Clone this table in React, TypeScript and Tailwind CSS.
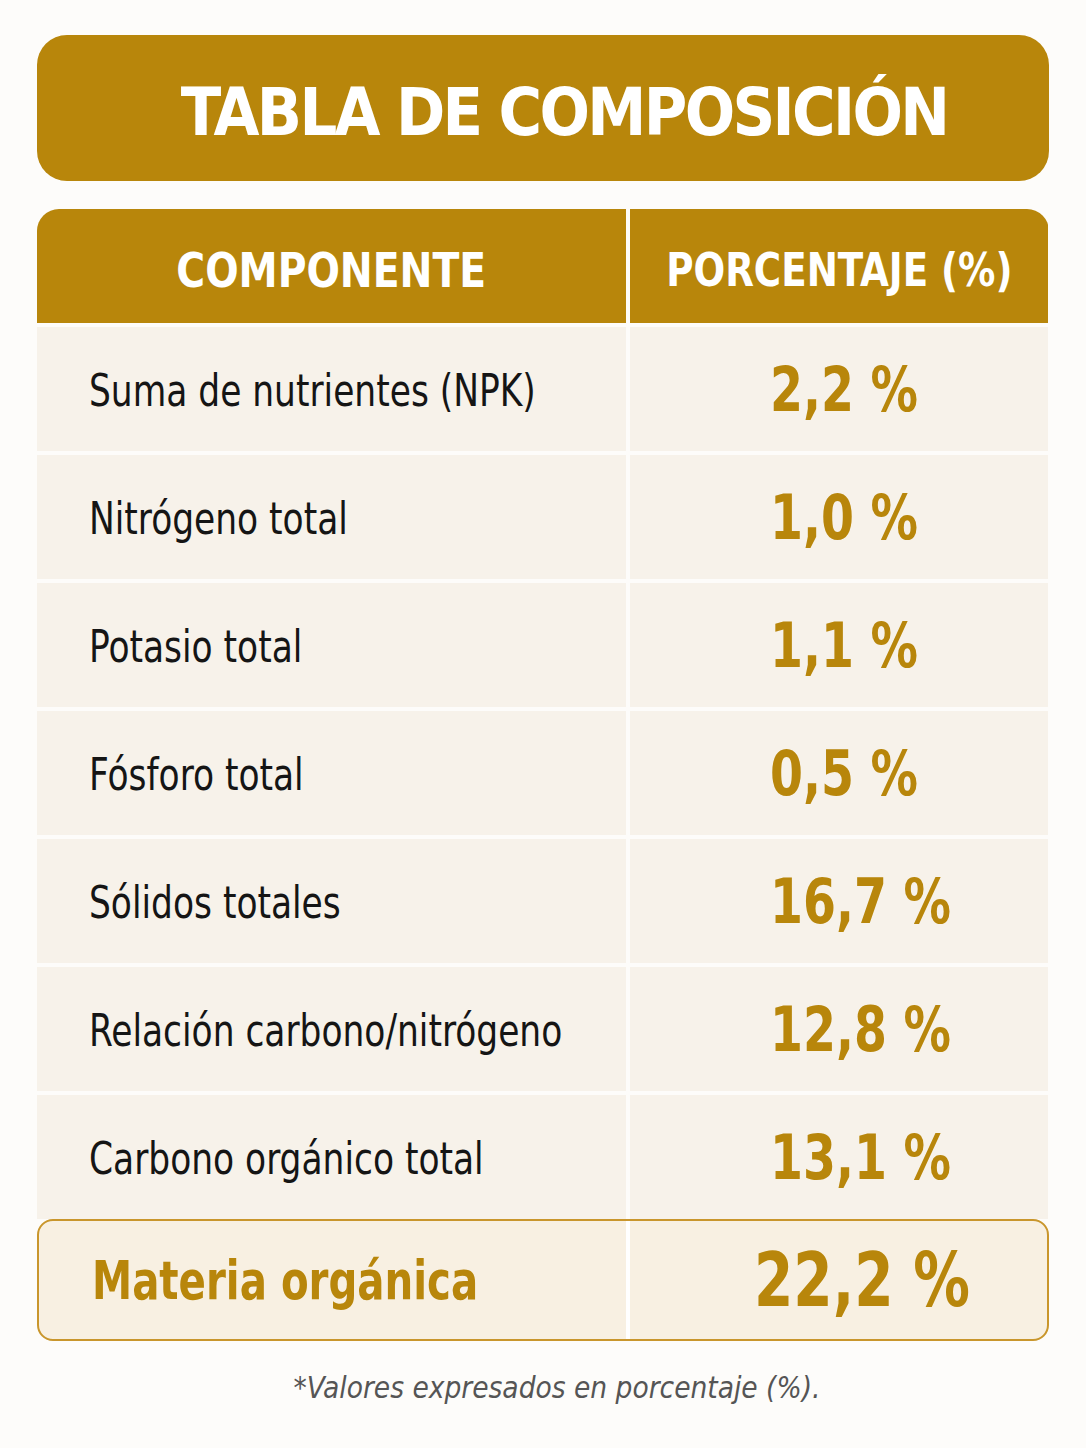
const rows = [
  { label: 'Suma de nutrientes (NPK)', value: '2,2 %' },
  { label: 'Nitrógeno total', value: '1,0 %' },
  { label: 'Potasio total', value: '1,1 %' },
  { label: 'Fósforo total', value: '0,5 %' },
  { label: 'Sólidos totales', value: '16,7 %' },
  { label: 'Relación carbono/nitrógeno', value: '12,8 %' },
  { label: 'Carbono orgánico total', value: '13,1 %' },
]

const narrow = { fontFamily: '"Liberation Sans Narrow", "DejaVu Sans Condensed", sans-serif' }

export default function App() {
  return (
    <div className="min-h-screen w-full bg-[#fdfcfa] px-[37px] pt-[35px] pb-10" style={narrow}>
      {/* Title */}
      <div className="flex h-[146px] items-center justify-center rounded-[30px] bg-[#b8860b] pl-[42px] pt-[10px]">
        <h1 className="text-[66px] font-bold leading-none tracking-[-0.04em] text-white">TABLA DE COMPOSICIÓN</h1>
      </div>

      {/* Table */}
      <div className="mt-[28px] flex flex-col gap-[4px]">
        <div className="grid h-[114px] grid-cols-[589px_418px] gap-x-[4px] overflow-hidden rounded-t-[22px]">
          <div className="flex items-center justify-center bg-[#b8860b] pt-[8px] text-[48px] font-bold text-white">
            <span className="inline-block scale-x-[0.91] whitespace-nowrap">COMPONENTE</span>
          </div>
          <div className="flex items-center justify-center bg-[#b8860b] pt-[8px] text-[46px] font-bold text-white">
            <span className="inline-block scale-x-[0.9] whitespace-nowrap">PORCENTAJE (%)</span>
          </div>
        </div>

        {rows.map((r) => (
          <div key={r.label} className="grid h-[124px] grid-cols-[589px_418px] gap-x-[4px]">
            <div className="flex items-center bg-[#f7f2ea] pl-[52px] pt-[4px] text-[44px] text-[#151515]">
              <span className="inline-block origin-left scale-x-[0.87] whitespace-nowrap">{r.label}</span>
            </div>
            <div className="flex items-center bg-[#f7f2ea] pl-[140px] text-[62px] font-bold text-[#b8860b]">
              <span className="inline-block origin-left scale-x-[0.85] whitespace-nowrap">{r.value}</span>
            </div>
          </div>
        ))}
      </div>

      {/* Highlighted total */}
      <div className="grid h-[122px] grid-cols-[587px_4px_416px] overflow-hidden rounded-[16px] border-2 border-[#c9962c] bg-[#f8f0e2]">
        <div className="flex items-center pl-[53px] text-[54px] font-bold text-[#b8860b]">
          <span className="inline-block origin-left scale-x-[0.83] whitespace-nowrap">Materia orgánica</span>
        </div>
        <div className="bg-white" />
        <div className="flex items-center pl-[124px] text-[74px] font-bold text-[#b8860b]">
          <span className="inline-block origin-left scale-x-[0.85] whitespace-nowrap">22,2 %</span>
        </div>
      </div>

      <p className="mt-[25px] pl-[28px] text-center text-[29.5px] italic text-[#555555]">
        *Valores expresados en porcentaje (%).
      </p>
    </div>
  )
}
